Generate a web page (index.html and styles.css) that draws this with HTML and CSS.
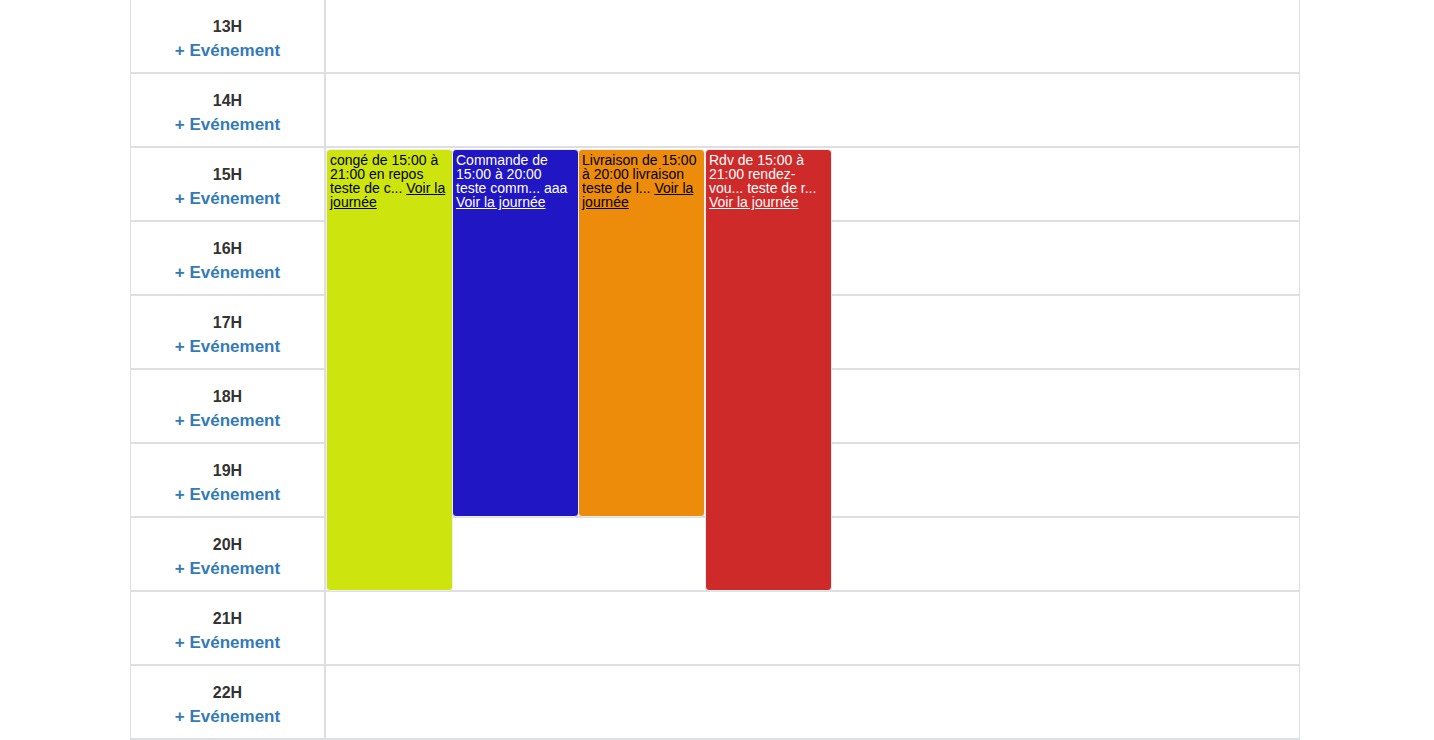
FILE: index.html
```html
<!DOCTYPE html>
<html>
<head>
	<meta charset="utf-8">
	<title>Planning</title>
	<link rel="stylesheet" href="styles.css">
</head>
<body>

	<div class="planning">
		<div class="row">
			<div class="hour"><strong>13H</strong><a href="#">+ Evénement</a></div>
			<div class="slot"></div>
		</div>
		<div class="row">
			<div class="hour"><strong>14H</strong><a href="#">+ Evénement</a></div>
			<div class="slot"></div>
		</div>
		<div class="row">
			<div class="hour"><strong>15H</strong><a href="#">+ Evénement</a></div>
			<div class="slot"></div>
		</div>
		<div class="row">
			<div class="hour"><strong>16H</strong><a href="#">+ Evénement</a></div>
			<div class="slot"></div>
		</div>
		<div class="row">
			<div class="hour"><strong>17H</strong><a href="#">+ Evénement</a></div>
			<div class="slot"></div>
		</div>
		<div class="row">
			<div class="hour"><strong>18H</strong><a href="#">+ Evénement</a></div>
			<div class="slot"></div>
		</div>
		<div class="row">
			<div class="hour"><strong>19H</strong><a href="#">+ Evénement</a></div>
			<div class="slot"></div>
		</div>
		<div class="row">
			<div class="hour"><strong>20H</strong><a href="#">+ Evénement</a></div>
			<div class="slot"></div>
		</div>
		<div class="row">
			<div class="hour"><strong>21H</strong><a href="#">+ Evénement</a></div>
			<div class="slot"></div>
		</div>
		<div class="row">
			<div class="hour"><strong>22H</strong><a href="#">+ Evénement</a></div>
			<div class="slot"></div>
		</div>

		<!-- évènements posés par-dessus la grille -->
		<div class="event conge" style="left:195px; height:442px;">
			congé de 15:00 à 21:00 en repos teste de c... <a href="#">Voir la journée</a>
		</div>
		<div class="event commande" style="left:321px; height:368px;">
			Commande de 15:00 à 20:00 teste comm... aaa <a href="#">Voir la journée</a>
		</div>
		<div class="event livraison" style="left:447px; height:368px;">
			Livraison de 15:00 à 20:00 livraison teste de l... <a href="#">Voir la journée</a>
		</div>
		<div class="event rdv" style="left:574px; height:442px;">
			Rdv de 15:00 à 21:00 rendez-vou... teste de r... <a href="#">Voir la journée</a>
		</div>
	</div>

</body>
</html>
```

FILE: styles.css
```css
body {
	margin: 0;
	font-family: "Liberation Sans", Arial, sans-serif;
	color: #333;
	background: #fff;
}

.planning {
	position: relative;
	width: 1168px;
	margin-left: 130px;
	border-left: 1px solid #dddfe3;
	border-right: 1px solid #dddfe3;
}

.row {
	display: flex;
	height: 72px;
	border-bottom: 2px solid #dddfe3;
}

.hour {
	width: 193px;
	border-right: 2px solid #dddfe3;
	padding-top: 15px;
	text-align: center;
	font-size: 16px;
	line-height: 24px;
}

.hour strong {
	display: block;
}

.hour a {
	display: block;
	font-size: 17px;
	font-weight: bold;
	color: #337ab7;
	text-decoration: none;
}

.slot {
	flex: 1;
}

.event {
	position: absolute;
	top: 149px;
	box-sizing: border-box;
	width: 127px;
	padding: 3px 3px;
	border: 1px solid #eceeee;
	border-radius: 4px;
	font-size: 14px;
	line-height: 14px;
}

.event a {
	color: inherit;
	text-decoration: underline;
}

.conge {
	background: #cde40f;
	color: #000;
}

.commande {
	background: #2016c4;
	color: #fff;
}

.livraison {
	background: #ed8b0a;
	color: #000;
}

.rdv {
	background: #cf2a2a;
	color: #fff;
}
```
